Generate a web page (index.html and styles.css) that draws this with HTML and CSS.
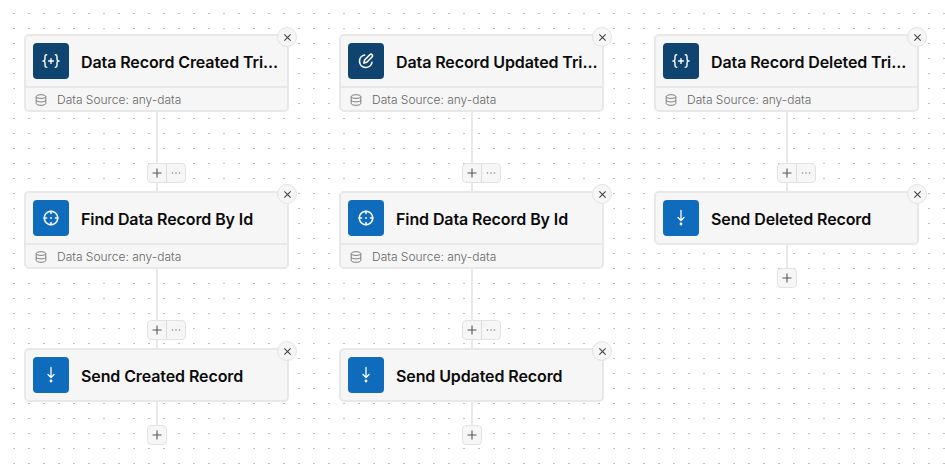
FILE: index.html
```html
<!DOCTYPE html>
<html lang="en">
<head>
<meta charset="utf-8">
<title>Flow</title>
<link rel="stylesheet" href="styles.css">
</head>
<body>
<svg class="dots" width="945" height="464" aria-hidden="true">
  <defs>
    <pattern id="dot-grid" width="15" height="15" patternUnits="userSpaceOnUse"><rect x="13" y="13" width="2" height="1" fill="#bebebe"/></pattern>
    <symbol id="i-db" viewBox="0 0 14 14"><g fill="none" stroke="currentColor" stroke-width="1.1"><ellipse cx="7" cy="3" rx="5.6" ry="2.2"/><path d="M1.400 3v8c0 1.200 2.500 2.200 5.600 2.200s5.600-1 5.600-2.200V3M1.400 7c0 1.200 2.500 2.200 5.600 2.200s5.600-1 5.600-2.200"/></g></symbol>
    <symbol id="i-x" viewBox="0 0 10 10"><path d="M1.500 1.500l7 7M8.500 1.500l-7 7" fill="none" stroke="currentColor" stroke-width="1.200"/></symbol>
    <symbol id="i-plus" viewBox="0 0 10 10"><path d="M5 .5v9M.5 5h9" fill="none" stroke="currentColor" stroke-width="1.100"/></symbol>
    <symbol id="i-more" viewBox="0 0 10 4"><g fill="currentColor"><circle cx="1.500" cy="2" r=".8"/><circle cx="5" cy="2" r=".8"/><circle cx="8.500" cy="2" r=".8"/></g></symbol>
    <symbol id="i-code" viewBox="0 0 18 18"><g fill="none" stroke="#fff" stroke-width="1.400" stroke-linecap="round"><path d="M4.700 2.800C3.300 2.800 3 3.500 3 4.500v2.600c0 .9-.4 1.600-1.300 1.900.9.300 1.300 1 1.300 1.900v2.600c0 1 .3 1.700 1.700 1.700M13.300 2.800c1.400 0 1.700 .7 1.700 1.700v2.600c0 .9 .4 1.600 1.300 1.900-.9 .3-1.300 1-1.300 1.900v2.600c0 1-.3 1.700-1.700 1.700M9 6.600v4.800M6.600 9h4.800"/></g></symbol>
    <symbol id="i-edit" viewBox="0 0 18 18"><g fill="none" stroke="#fff" stroke-width="1.600" stroke-linecap="round" stroke-linejoin="round"><path d="M7.600 3a6.300 6.300 0 1 0 7.400 7.400"/><path d="M6.900 11.100l.7-3.100 5.200-5.200c.7-.7 1.700-.7 2.300-.1s.6 1.600-.1 2.300l-5.200 5.200z"/></g></symbol>
    <symbol id="i-target" viewBox="0 0 18 18"><g fill="none" stroke="#fff" stroke-width="1.500" stroke-linecap="round"><circle cx="9" cy="9" r="6.800"/><path d="M9 2.200v2.300M9 13.500v2.300M2.200 9h2.300M13.500 9h2.300"/></g><circle cx="9" cy="9" r=".9" fill="#fff"/></symbol>
    <symbol id="i-down" viewBox="0 0 18 18"><path d="M9 1.500v9.500M6 8.500l3 3 3-3" fill="none" stroke="#fff" stroke-width="1.300" stroke-linecap="round" stroke-linejoin="round"/><circle cx="9" cy="15" r="1.400" fill="#fff"/></symbol>
  </defs>
  <rect width="945" height="464" fill="url(#dot-grid)"/>
</svg>
<main class="canvas">
  <section class="column">
    <article class="node">
      <div class="node-head"><span class="tile tile-dark"><svg class="glyph"><use href="#i-code"/></svg></span><h2 class="name">Data Record Created Tri...</h2></div>
      <div class="node-foot"><svg class="db"><use href="#i-db"/></svg>Data Source: any-data</div>
      <button class="close"><svg><use href="#i-x"/></svg></button>
    </article>
    <div class="link"><div class="tools"><span class="tool"><svg class="plus"><use href="#i-plus"/></svg></span><span class="tool"><svg class="more"><use href="#i-more"/></svg></span></div></div>
    <article class="node">
      <div class="node-head"><span class="tile tile-blue"><svg class="glyph"><use href="#i-target"/></svg></span><h2 class="name">Find Data Record By Id</h2></div>
      <div class="node-foot"><svg class="db"><use href="#i-db"/></svg>Data Source: any-data</div>
      <button class="close"><svg><use href="#i-x"/></svg></button>
    </article>
    <div class="link"><div class="tools"><span class="tool"><svg class="plus"><use href="#i-plus"/></svg></span><span class="tool"><svg class="more"><use href="#i-more"/></svg></span></div></div>
    <article class="node">
      <div class="node-head"><span class="tile tile-blue"><svg class="glyph"><use href="#i-down"/></svg></span><h2 class="name">Send Created Record</h2></div>
      <button class="close"><svg><use href="#i-x"/></svg></button>
    </article>
    <div class="link link-end"><div class="tools"><span class="tool"><svg class="plus"><use href="#i-plus"/></svg></span></div></div>
  </section>
  <section class="column">
    <article class="node">
      <div class="node-head"><span class="tile tile-dark"><svg class="glyph"><use href="#i-edit"/></svg></span><h2 class="name">Data Record Updated Tri...</h2></div>
      <div class="node-foot"><svg class="db"><use href="#i-db"/></svg>Data Source: any-data</div>
      <button class="close"><svg><use href="#i-x"/></svg></button>
    </article>
    <div class="link"><div class="tools"><span class="tool"><svg class="plus"><use href="#i-plus"/></svg></span><span class="tool"><svg class="more"><use href="#i-more"/></svg></span></div></div>
    <article class="node">
      <div class="node-head"><span class="tile tile-blue"><svg class="glyph"><use href="#i-target"/></svg></span><h2 class="name">Find Data Record By Id</h2></div>
      <div class="node-foot"><svg class="db"><use href="#i-db"/></svg>Data Source: any-data</div>
      <button class="close"><svg><use href="#i-x"/></svg></button>
    </article>
    <div class="link"><div class="tools"><span class="tool"><svg class="plus"><use href="#i-plus"/></svg></span><span class="tool"><svg class="more"><use href="#i-more"/></svg></span></div></div>
    <article class="node">
      <div class="node-head"><span class="tile tile-blue"><svg class="glyph"><use href="#i-down"/></svg></span><h2 class="name">Send Updated Record</h2></div>
      <button class="close"><svg><use href="#i-x"/></svg></button>
    </article>
    <div class="link link-end"><div class="tools"><span class="tool"><svg class="plus"><use href="#i-plus"/></svg></span></div></div>
  </section>
  <section class="column">
    <article class="node">
      <div class="node-head"><span class="tile tile-dark"><svg class="glyph"><use href="#i-code"/></svg></span><h2 class="name">Data Record Deleted Tri...</h2></div>
      <div class="node-foot"><svg class="db"><use href="#i-db"/></svg>Data Source: any-data</div>
      <button class="close"><svg><use href="#i-x"/></svg></button>
    </article>
    <div class="link"><div class="tools"><span class="tool"><svg class="plus"><use href="#i-plus"/></svg></span><span class="tool"><svg class="more"><use href="#i-more"/></svg></span></div></div>
    <article class="node">
      <div class="node-head"><span class="tile tile-blue"><svg class="glyph"><use href="#i-down"/></svg></span><h2 class="name">Send Deleted Record</h2></div>
      <button class="close"><svg><use href="#i-x"/></svg></button>
    </article>
    <div class="link link-end"><div class="tools"><span class="tool"><svg class="plus"><use href="#i-plus"/></svg></span></div></div>
  </section>
</main>
</body>
</html>
```
FILE: styles.css
```css
* { box-sizing: border-box; }
html, body { margin: 0; height: 100%; }
body {
  position: relative;
  overflow: hidden;
  background: #fff;
  font-family: "Inter", "Liberation Sans", sans-serif;
}
.dots { position: absolute; top: 0; left: 0; }
.canvas {
  position: relative;
  display: flex;
  gap: 50px;
  height: 464px;
  padding: 34px 0 0 24px;
}
.column { width: 265px; display: flex; flex-direction: column; }
.node {
  position: relative;
  background: #f6f6f6;
  border: 2px solid #e8e8e8;
  border-radius: 5px;
}
.node-head { display: flex; align-items: center; gap: 12px; height: 50px; padding: 0 12px 0 7px; }
.tile { flex: none; width: 36px; height: 36px; border-radius: 4px; display: flex; align-items: center; justify-content: center; }
.tile-dark { background: #0f4470; }
.tile-blue { background: #0f6cbd; }
.glyph { width: 18px; height: 18px; }
.name {
  margin: 2px 0 0;
  min-width: 0;
  font-size: 16px;
  line-height: 22px;
  font-weight: 600;
  letter-spacing: -0.1px;
  color: #0b0b0b;
  white-space: nowrap;
}
.node-foot {
  display: flex;
  align-items: center;
  gap: 10px;
  height: 24px;
  padding: 1px 0 0 9px;
  border-top: 2px solid #e8e8e8;
  font-size: 12px;
  font-weight: 300;
  color: #666;
}
.db { width: 12px; height: 14px; color: #777; }
.close {
  position: absolute;
  top: -9px;
  right: -10px;
  width: 20px;
  height: 20px;
  padding: 0;
  border: 1px solid #e3e3e3;
  border-radius: 50%;
  background: #f6f6f6;
  color: #444;
  display: flex;
  align-items: center;
  justify-content: center;
}
.close svg { width: 9px; height: 9px; }
.link { position: relative; height: 79px; }
.link::before {
  content: "";
  position: absolute;
  top: 0;
  bottom: 0;
  left: 132px;
  width: 2px;
  background: #e8e8e8;
}
.link-end { height: 23px; }
.tools {
  position: absolute;
  top: 51px;
  left: 123px;
  display: flex;
  height: 20px;
  background: #f6f6f6;
  border: 1px solid #e3e3e3;
  border-radius: 4px;
}
.link-end .tools { top: 23px; }
.tool { width: 18px; display: flex; align-items: center; justify-content: center; color: #555; }
.tool + .tool { width: 19px; border-left: 1px solid #dcdcdc; color: #888; }
.plus { width: 10px; height: 10px; }
.more { width: 10px; height: 4px; }
```
